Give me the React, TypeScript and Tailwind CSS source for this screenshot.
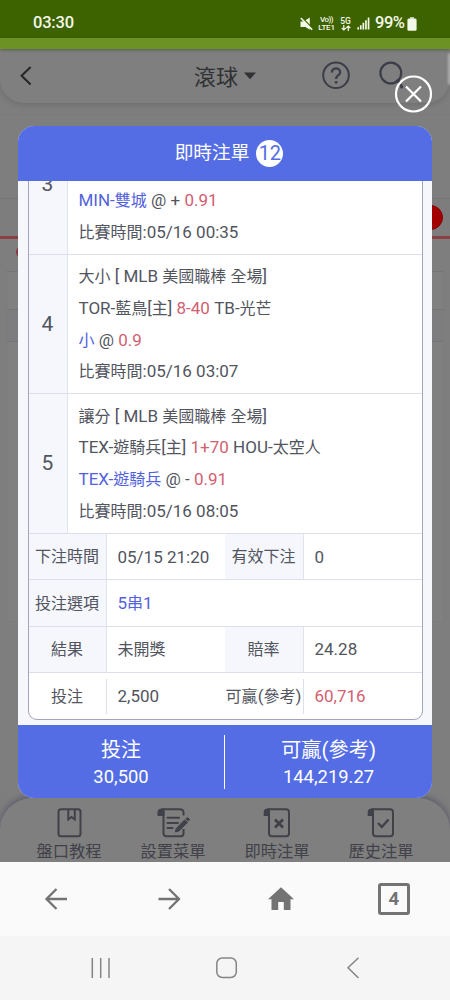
import React from 'react';

const BLUE = 'text-[#5261dc]';
const RED = 'text-[#d2606f]';

/** Sets Latin runs slightly larger than the Chinese text around them. */
function Mixed({ text, className }: { text: string; className?: string }) {
  const runs = text.split(/([\x20-\x7e]+)/).filter(Boolean);
  return (
    <span className={className}>
      {runs.map((run, i) => (
        <span key={i} className={/^[\x20-\x7e]/.test(run) ? 'text-[17px] whitespace-pre' : 'text-[16px]'}>
          {run}
        </span>
      ))}
    </span>
  );
}

function StatusBar() {
  return (
    <div className="flex h-[38px] shrink-0 items-center bg-[#3d6200] pt-[9px] pl-[33px] pr-[33px] text-[#f4f8e8]">
      <span className="text-[16.5px] leading-none font-medium tracking-[-0.2px]">03:30</span>
      <div className="ml-auto flex items-center">
        <svg width="13" height="14" viewBox="0 0 13 14" fill="none">
          <path d="M0.5 4.6H3.6L9.8 0.4V12.8L5.5 10H0.5Z" fill="currentColor" />
          <path d="M1.6 0.2L13 11.8" stroke="#3d6200" strokeWidth="1.3" />
          <path d="M0.8 1L12.2 12.8" stroke="currentColor" strokeWidth="1.6" />
        </svg>
        <div className="ml-[5px] flex w-[17px] flex-col items-center text-[8px] leading-[7.5px] font-medium">
          <span className="whitespace-nowrap tracking-[-0.5px]">Vo))</span>
          <span className="whitespace-nowrap tracking-[-0.2px]">LTE1</span>
        </div>
        <div className="ml-[5px] flex w-[11px] flex-col items-center text-[8.5px] leading-[8px] font-medium">
          <span>5G</span>
          <svg width="10" height="6" viewBox="0 0 10 6" fill="none" stroke="currentColor" strokeWidth="1.2">
            <path d="M2.8 0V5M0.8 3L2.8 5L4.8 3M7.3 6V1M5.3 3L7.3 1L9.3 3" />
          </svg>
        </div>
        <svg className="ml-[6px]" width="13" height="13" viewBox="0 0 13 13" fill="currentColor">
          <path d="M0.3 10.3h1.7v2.2H0.3zM2.9 8.3h1.7v4.2H2.9zM5.5 5.8h1.7v6.7H5.5zM8.1 3.3h1.7v9.2H8.1zM10.7 0.6h1.7v11.9h-1.7z" />
        </svg>
        <span className="ml-[5px] w-[31px] text-[16.5px] leading-none font-medium tracking-[-0.5px]">99%</span>
        <svg className="ml-[1px]" width="10" height="14" viewBox="0 0 10 14" fill="currentColor">
          <path d="M3 0.3h4v1.4H3z" />
          <rect x="0.4" y="1.5" width="9.2" height="12.3" rx="1.5" />
        </svg>
      </div>
    </div>
  );
}

function PageHeader() {
  return (
    <div className="grid h-[54px] shrink-0 grid-cols-[194px_72px_1fr] items-center rounded-b-[24px] bg-[#7f7f7f] shadow-[0_2px_7px_rgba(0,0,0,0.13)]">
      <svg className="ml-[19px]" width="14" height="22" viewBox="0 0 14 22" fill="none" stroke="#27282b" strokeWidth="2.1">
        <path d="M11.6 2L2.6 10.7L11.6 19.5" />
      </svg>
      <div className="flex items-center gap-[6px] text-[22px] leading-[30px] text-[#303134]">
        <span className="pt-[3px]">滾球</span>
        <svg className="shrink-0" width="12" height="8" viewBox="0 0 12 8" fill="currentColor">
          <path d="M0 0.5H12L6 7.3Z" />
        </svg>
      </div>
      <div className="flex items-center pl-[55px] text-[#3b3d48]">
        <svg width="30" height="30" viewBox="0 0 30 30" fill="none" stroke="currentColor" strokeWidth="2">
          <circle cx="15" cy="14.3" r="12.8" />
          <path d="M10.9 11.6C10.9 6 19.2 6 19.2 11.2C19.2 14.2 15.1 14.3 15.1 18" strokeWidth="2.2" />
          <circle cx="15.1" cy="21.3" r="1.4" fill="currentColor" stroke="none" />
        </svg>
        <svg className="ml-[28px]" width="28" height="30" viewBox="0 0 28 30" fill="none" stroke="currentColor" strokeWidth="2.2">
          <circle cx="11.8" cy="12" r="10.4" />
          <path d="M19 19.3L22.7 26" strokeLinecap="round" strokeWidth="3" />
        </svg>
      </div>
    </div>
  );
}

function DimmedContent() {
  return (
    <div className="flex grow flex-col">
      <div className="mt-[11px] h-[85px] border-t border-t-[#7b7b7b] border-b border-b-[#757575]" />
      <div className="flex h-[40px] items-center justify-end border-b-[3px] border-[#8a4043] bg-[#7d7d7d] pr-[7px]">
        <div className="size-[25px] rounded-full border border-[#810000] bg-[#a30000]" />
      </div>
      <div className="flex h-[32px] items-start pt-[7px] pl-[16px]">
        <div className="size-[12px] rounded-full bg-[#86393e]" />
      </div>
      <div className="mx-[6px] flex h-[351px] flex-col border border-t-[#767676] border-x-[#7c7c7c] border-b-[#7c7c7c] bg-[#808080]">
        <div className="h-[38px] border-b border-[#757578]" />
        <div className="h-[32px] border-b border-[#757578] bg-[#7d7d80]" />
      </div>
    </div>
  );
}

function TabBar() {
  const tabs = [
    {
      label: '盤口教程',
      icon: (
        <>
          <rect x="3" y="1.2" width="22" height="27" rx="2.5" />
          <path d="M12.8 1.2V11.5L16 9L19.3 11.5V1.2" />
        </>
      ),
    },
    {
      label: '設置菜單',
      icon: (
        <>
          <path d="M-1 7V4Q-1 1.2 4 1.5V7Z" fill="currentColor" />
          <path d="M2 1.2H20Q24 1.2 24 4.5V7.5" />
          <path d="M4 3V25.5Q4 28.2 7 28.2H21.5Q24 28.2 24 25.5V21" />
          <path d="M8 9.8H19.5M8 15H18.5M8 20H13" strokeLinecap="round" />
          <path d="M16.5 20.8L25 12L28 14.5L19.5 23L16 24Z" fill="currentColor" strokeWidth="1" />
          <path d="M26.8 10L29.6 12.5" strokeWidth="3" />
        </>
      ),
    },
    {
      label: '即時注單',
      icon: (
        <>
          <path d="M1.2 7V4Q1.2 1.2 5.5 1.5V7Z" fill="currentColor" />
          <path d="M4 1.2H22.5Q25.5 1.2 25.5 4.2V25.5Q25.5 28.2 22.8 28.2H8.2Q5.5 28.2 5.5 25.5V3" />
          <path d="M11.5 11.5L19.5 19.5M19.5 11.5L11.5 19.5" strokeWidth="2.8" />
        </>
      ),
    },
    {
      label: '歷史注單',
      icon: (
        <>
          <path d="M1.2 7V4Q1.2 1.2 5.5 1.5V7Z" fill="currentColor" />
          <path d="M4 1.2H22.5Q25.5 1.2 25.5 4.2V25.5Q25.5 28.2 22.8 28.2H8.2Q5.5 28.2 5.5 25.5V3" />
          <path d="M10.5 15L14.3 19L21 11.5" strokeWidth="2.5" />
        </>
      ),
    },
  ];
  return (
    <div className="h-[64px] shrink-0 overflow-hidden rounded-t-[32px] bg-[#7f7f7f] shadow-[0_-2px_6px_rgba(70,70,95,0.65)]">
      <div className="grid h-full grid-cols-4 px-[17px] text-[#414149]">
        {tabs.map((tab) => (
          <div key={tab.label} className="flex flex-col items-center pt-[10px]">
            <svg width="33" height="31" viewBox="-2.5 0 33 31" fill="none" stroke="currentColor" strokeWidth="2">
              {tab.icon}
            </svg>
            <span className="text-[16.3px] leading-[26px] whitespace-nowrap">{tab.label}</span>
          </div>
        ))}
      </div>
    </div>
  );
}

function BetRow({ index, children }: { index: number; children: React.ReactNode }) {
  return (
    <div className="flex h-[139.5px] shrink-0 border-b border-[#dcdfeb]">
      <div className="flex w-[39px] shrink-0 items-center justify-center border-r border-[#e0e3ee] bg-[#f5f7fc] pt-[1px] text-[21px]">
        {index}
      </div>
      <div className="flex grow flex-col justify-end pb-[5px] pl-[11px] leading-[31.7px]">{children}</div>
    </div>
  );
}

function Label({ children, plain }: { children: React.ReactNode; plain?: boolean }) {
  return (
    <div
      className={
        plain
          ? 'my-[5px] flex items-center justify-center border-r border-[#dcdfeb] pt-[2px] whitespace-nowrap'
          : 'flex items-center justify-center border-r border-[#e0e3ee] bg-[#f5f7fc] pt-[2px] whitespace-nowrap'
      }
    >
      {children}
    </div>
  );
}

function Value({ children }: { children: React.ReactNode }) {
  return <div className="flex items-center pt-[2px] pl-[11px]">{children}</div>;
}

function BetModal() {
  return (
    <div className="absolute top-[77px] left-[18px] flex h-[672px] w-[414px] flex-col overflow-hidden rounded-[16px] bg-[#f6f7fb] text-[#52545e]">
      <div className="z-10 flex h-[54.5px] shrink-0 items-center justify-center gap-[7px] bg-[#546de5] pl-[8px] text-[18.7px] text-white">
        <span className="leading-[28px]">即時注單</span>
        <span className="flex size-[27px] items-center justify-center rounded-full bg-white text-[20px] leading-none text-[#546de5]">12</span>
      </div>
      <div className="flex h-[544.5px] shrink-0 flex-col justify-end overflow-hidden px-[9.5px] pb-[5.5px] text-[16px]">
        <div className="flex shrink-0 flex-col overflow-hidden rounded-[9px] border border-[#a2a4bf] bg-white">
          <BetRow index={3}>
            <div><Mixed className={BLUE} text="MIN-雙城" /><Mixed text=" @ + " /><Mixed className={RED} text="0.91" /></div>
            <div><Mixed text="比賽時間:05/16 00:35" /></div>
          </BetRow>
          <BetRow index={4}>
            <div><Mixed text="大小 [ MLB 美國職棒 全場]" /></div>
            <div><Mixed text="TOR-藍鳥[主] " /><Mixed className={RED} text="8-40" /><Mixed text=" TB-光芒" /></div>
            <div><Mixed className={BLUE} text="小" /><Mixed text=" @ " /><Mixed className={RED} text="0.9" /></div>
            <div><Mixed text="比賽時間:05/16 03:07" /></div>
          </BetRow>
          <BetRow index={5}>
            <div><Mixed text="讓分 [ MLB 美國職棒 全場]" /></div>
            <div><Mixed text="TEX-遊騎兵[主] " /><Mixed className={RED} text="1+70" /><Mixed text=" HOU-太空人" /></div>
            <div><Mixed className={BLUE} text="TEX-遊騎兵" /><Mixed text=" @ - " /><Mixed className={RED} text="0.91" /></div>
            <div><Mixed text="比賽時間:05/16 08:05" /></div>
          </BetRow>
          <div className="grid h-[46.5px] grid-cols-[78px_118px_79px_1fr] border-b border-[#dcdfeb]">
            <Label>下注時間</Label>
            <Value><Mixed text="05/15 21:20" /></Value>
            <Label>有效下注</Label>
            <Value><Mixed text="0" /></Value>
          </div>
          <div className="grid h-[46.5px] grid-cols-[78px_1fr] border-b border-[#dcdfeb]">
            <Label>投注選項</Label>
            <Value><Mixed className={BLUE} text="5串1" /></Value>
          </div>
          <div className="grid h-[46px] grid-cols-[78px_118px_79px_1fr] border-b border-[#dcdfeb]">
            <Label>結果</Label>
            <Value>未開獎</Value>
            <Label>賠率</Label>
            <Value><Mixed text="24.28" /></Value>
          </div>
          <div className="grid h-[46px] grid-cols-[78px_118px_79px_1fr] pt-[1px]">
            <Label plain>投注</Label>
            <Value><Mixed text="2,500" /></Value>
            <Label plain><Mixed text="可贏(參考)" /></Label>
            <Value><Mixed className={RED} text="60,716" /></Value>
          </div>
        </div>
      </div>
      <div className="flex grow items-center bg-[#546de5] text-white">
        <div className="flex w-[206px] flex-col items-center pt-[3px]">
          <span className="text-[20px] leading-[28px]">投注</span>
          <span className="text-[18.4px] leading-[26px]">30,500</span>
        </div>
        <div className="h-[54px] w-px bg-white" />
        <div className="flex grow flex-col items-center pt-[3px]">
          <span className="text-[20.3px] leading-[28px]">可贏(參考)</span>
          <span className="text-[18.4px] leading-[26px]">144,219.27</span>
        </div>
      </div>
    </div>
  );
}

function BrowserBar() {
  return (
    <div className="grid h-[74px] shrink-0 grid-cols-4 place-items-center bg-[#fafafa] text-[#737373]">
      <svg width="24" height="24" viewBox="0 0 24 24" fill="none" stroke="currentColor" strokeWidth="2.3">
        <path d="M23 12H3M12.5 2L2.5 12L12.5 22" />
      </svg>
      <svg width="24" height="24" viewBox="0 0 24 24" fill="none" stroke="currentColor" strokeWidth="2.3">
        <path d="M1.5 12H21.5M12 2L22 12L12 22" />
      </svg>
      <svg width="26" height="24" viewBox="0 0 26 24" fill="currentColor">
        <path d="M13 0.3L26 12.2H22.5V23H15.8V15H10.2V23H3.5V12.2H0Z" />
      </svg>
      <div className="flex size-[32px] items-center justify-center rounded-[3px] border-[3px] border-[#737373] text-[18.5px] leading-none font-bold">4</div>
    </div>
  );
}

function SystemNav() {
  return (
    <div className="flex h-[64px] shrink-0 items-center bg-[#f5f5f5] pl-[90px] text-[#858585]">
      <svg width="22" height="22" viewBox="0 0 22 22" fill="none" stroke="currentColor" strokeWidth="1.5">
        <path d="M2.3 1V21M10.7 1V21M19 1V21" />
      </svg>
      <svg className="ml-[103px]" width="23" height="22" viewBox="0 0 23 22" fill="none" stroke="currentColor" strokeWidth="1.5">
        <rect x="1.8" y="1" width="19.5" height="19.5" rx="5.5" />
      </svg>
      <svg className="ml-[108px]" width="14" height="22" viewBox="0 0 14 22" fill="none" stroke="currentColor" strokeWidth="1.5">
        <path d="M12.5 0.8L2 10.7L12.5 21" />
      </svg>
    </div>
  );
}

export default function App() {
  return (
    <div className="flex h-[1000px] w-[450px] flex-col overflow-hidden bg-[#7f7f7f] font-['Roboto','Noto_Sans_CJK_TC',sans-serif]">
      <StatusBar />
      <div className="z-10 h-[11px] shrink-0 bg-[#6b9222] shadow-[0_1px_3px_rgba(40,50,20,0.45)]" />
      <div className="relative flex h-[813px] shrink-0 flex-col overflow-hidden bg-[#7e7e7e]">
        <PageHeader />
        <DimmedContent />
        <TabBar />
        <div className="absolute top-[4px] -right-px h-[32px] w-[3px] rounded-l-full bg-[#b0b0b0] blur-[1px]" />
        <BetModal />
        <svg className="absolute top-[26px] left-[394px]" width="39" height="39" viewBox="0 0 39 39" fill="none" stroke="white" strokeWidth="2.2">
          <circle cx="19.5" cy="19" r="17.5" />
          <path d="M12 11.5L27 26.5M27 11.5L12 26.5" />
        </svg>
      </div>
      <BrowserBar />
      <SystemNav />
    </div>
  );
}
